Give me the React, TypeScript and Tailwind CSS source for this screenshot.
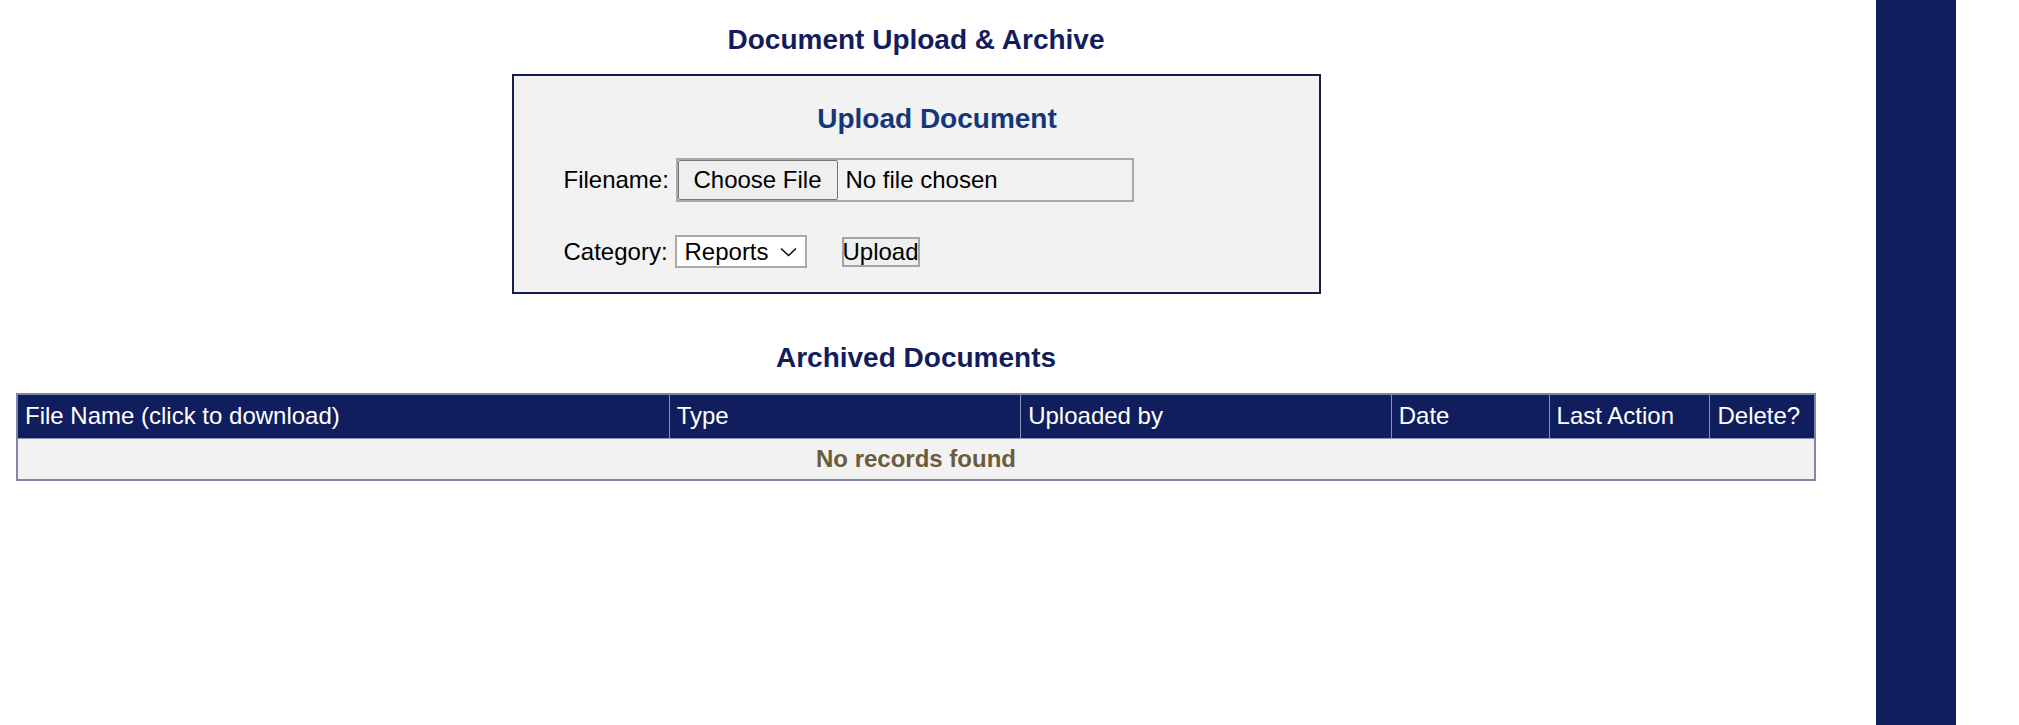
import React from "react";

export default function App() {
  const columns = [
    { name: "File Name (click to download)", width: "w-[653px]" },
    { name: "Type", width: "w-[352px]" },
    { name: "Uploaded by", width: "w-[371px]" },
    { name: "Date", width: "w-[158px]" },
    { name: "Last Action", width: "w-[161px]" },
    { name: "Delete?", width: "w-[105px]" },
  ];

  return (
    <div className="flex h-screen overflow-hidden bg-white font-['Liberation_Sans',Arial,sans-serif] text-[24px] text-black">
      {/* Content */}
      <main className="w-[1832px] shrink-0 flex flex-col items-center">
        <h3 className="pt-[24px] text-[28px] leading-8 font-bold text-[#141d5b]">Document Upload &amp; Archive</h3>

        <div className="mt-[18px] w-[809px] h-[220px] border-2 border-[#141c50] bg-[#f2f2f2] flex flex-col">
          <h3 className="pt-[27px] pl-[42px] text-center text-[28px] leading-8 font-bold text-[#12387a]">Upload Document</h3>

          <div className="mt-[23px] pl-[50px] flex items-center h-[44px]">
            <span className="w-[112px] leading-7">Filename:</span>
            <div className="w-[458px] h-[44px] border-2 border-[#a9a9a9] flex items-center">
              <div className="h-[40px] w-[160px] border border-[#767676] rounded-[2px] bg-[#efefef] flex items-center justify-center leading-7">
                Choose File
              </div>
              <span className="ml-[8px] leading-7">No file chosen</span>
            </div>
          </div>

          <div className="mt-[33px] pl-[50px] flex items-center h-[33px]">
            <span className="w-[111px] leading-7">Category:</span>
            <div className="w-[132px] h-[33px] border-2 border-[#a9a9a9] bg-white flex items-center pl-[8px] pr-[8px] justify-between">
              <span className="leading-7">Reports</span>
              <svg width="17" height="10" viewBox="0 0 17 10" fill="none" stroke="#111" strokeWidth="1.6">
                <path d="M1 1.5 L8.5 8.5 L16 1.5" />
              </svg>
            </div>
            <button className="ml-[35px] w-[78px] h-[30px] border-2 border-[#a3a3a3] bg-[#efefef] flex items-center justify-center leading-7 text-black">
              Upload
            </button>
          </div>
        </div>

        <h3 className="mt-[48px] text-[28px] leading-8 font-bold text-[#141d5b]">Archived Documents</h3>

        <table className="mt-[19px] w-[1800px] border-collapse border-2 border-[#7f85a5]">
          <thead>
            <tr className="bg-[#111e5e] text-white h-[44px]">
              {columns.map((col) => (
                <th
                  key={col.name}
                  className={`${col.width} border border-[#8c92b4] px-[7px] text-left font-normal leading-7`}
                >
                  {col.name}
                </th>
              ))}
            </tr>
          </thead>
          <tbody>
            <tr className="bg-[#f2f2f2] h-[42px]">
              <td colSpan={6} className="text-center font-bold text-[#6b5b3e] leading-7">
                No records found
              </td>
            </tr>
          </tbody>
        </table>
      </main>

      {/* Right bar */}
      <div className="w-[44px] shrink-0" />
      <aside className="w-[80px] shrink-0 bg-[#111e5e]" />
      <div className="flex-1" />
    </div>
  );
}
